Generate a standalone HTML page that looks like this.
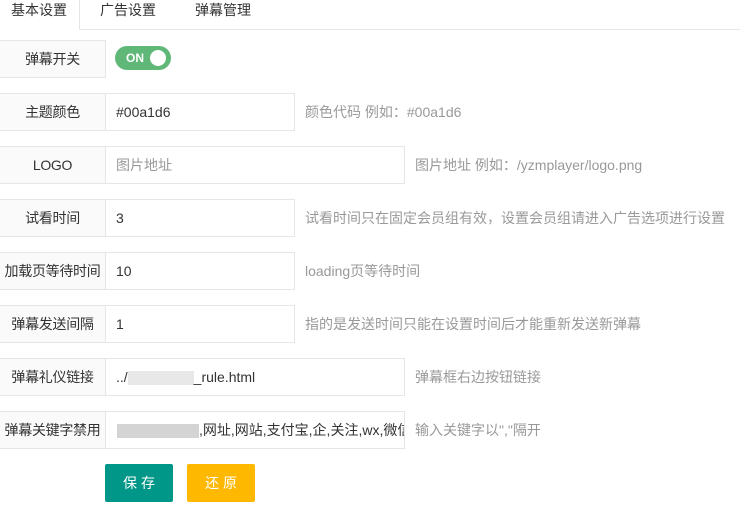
<!DOCTYPE html>
<html><head><meta charset="utf-8"><style>
body{margin:0;width:740px;height:529px;background:#fff;font-family:"Liberation Sans","Noto Sans CJK SC",sans-serif;font-size:14px;color:#333;position:relative;overflow:hidden}
.tabs{position:absolute;left:0;top:0;width:740px;height:29px;border-bottom:1px solid #e6e6e6}
.tab{position:absolute;top:0;height:29px;line-height:20px;font-size:14px}
.t1{left:-1px;width:80px;border-right:1px solid #e6e6e6;background:#fff;height:30px;text-align:center}
.row{position:absolute;left:0;height:38px}
.lab{position:absolute;left:-1px;top:0;width:105px;height:36px;border:1px solid #e6e6e6;background:#fafafa;text-align:center;line-height:36px;white-space:nowrap;font-size:14px;letter-spacing:-0.3px}
.inp{position:absolute;left:105px;top:0;border:1px solid #e6e6e6;border-left:none;line-height:36px;padding-left:11px;box-sizing:border-box;height:38px;white-space:nowrap;overflow:hidden}
.s{width:190px}.l{width:300px}
.help{position:absolute;top:0;line-height:38px;color:#999;white-space:nowrap}
.sw{position:absolute;left:115px;top:46px;width:56px;height:24px;border-radius:12px;background:#5fb878;color:#fff;font-size:12px;line-height:24px;font-weight:bold}
.sw span{position:absolute;left:11px}
.sw i{position:absolute;right:5px;top:4px;width:16px;height:16px;border-radius:50%;background:#fff}
.btn{position:absolute;top:464px;width:68px;height:38px;line-height:38px;text-align:center;color:#fff;font-size:14px;letter-spacing:4px;text-indent:4px;border-radius:2px}
.blur{display:inline-block;height:14px;background:#ddd;vertical-align:middle}
</style></head><body>
<div class="tabs">
<div class="tab t1">基本设置</div>
<div class="tab" style="left:100px">广告设置</div>
<div class="tab" style="left:195px">弹幕管理</div>
</div>
<div class="row" style="top:40px"><div class="lab">弹幕开关</div></div>
<div class="sw"><span>ON</span><i></i></div>
<div class="row" style="top:93px"><div class="lab">主题颜色</div><div class="inp s">#00a1d6</div><div class="help" style="left:305px">颜色代码 例如：#00a1d6</div></div>
<div class="row" style="top:146px"><div class="lab">LOGO</div><div class="inp l" style="color:#999">图片地址</div><div class="help" style="left:415px">图片地址 例如：/yzmplayer/logo.png</div></div>
<div class="row" style="top:199px"><div class="lab">试看时间</div><div class="inp s">3</div><div class="help" style="left:305px">试看时间只在固定会员组有效，设置会员组请进入广告选项进行设置</div></div>
<div class="row" style="top:252px"><div class="lab">加载页等待时间</div><div class="inp s">10</div><div class="help" style="left:305px">loading页等待时间</div></div>
<div class="row" style="top:305px"><div class="lab">弹幕发送间隔</div><div class="inp s">1</div><div class="help" style="left:305px">指的是发送时间只能在设置时间后才能重新发送新弹幕</div></div>
<div class="row" style="top:358px"><div class="lab">弹幕礼仪链接</div><div class="inp l">../<span class="blur" style="width:66px;background:#e8e8e8"></span>_rule.html</div><div class="help" style="left:415px">弹幕框右边按钮链接</div></div>
<div class="row" style="top:411px"><div class="lab">弹幕关键字禁用</div><div class="inp l" style="padding-left:12px"><span class="blur" style="width:82px;background:#d4d4d4"></span>,网址,网站,支付宝,企,关注,wx,微信</div><div class="help" style="left:415px">输入关键字以","隔开</div></div>
<div class="btn" style="left:105px;background:#009688">保存</div>
<div class="btn" style="left:187px;background:#ffb800">还原</div>
</body></html>
